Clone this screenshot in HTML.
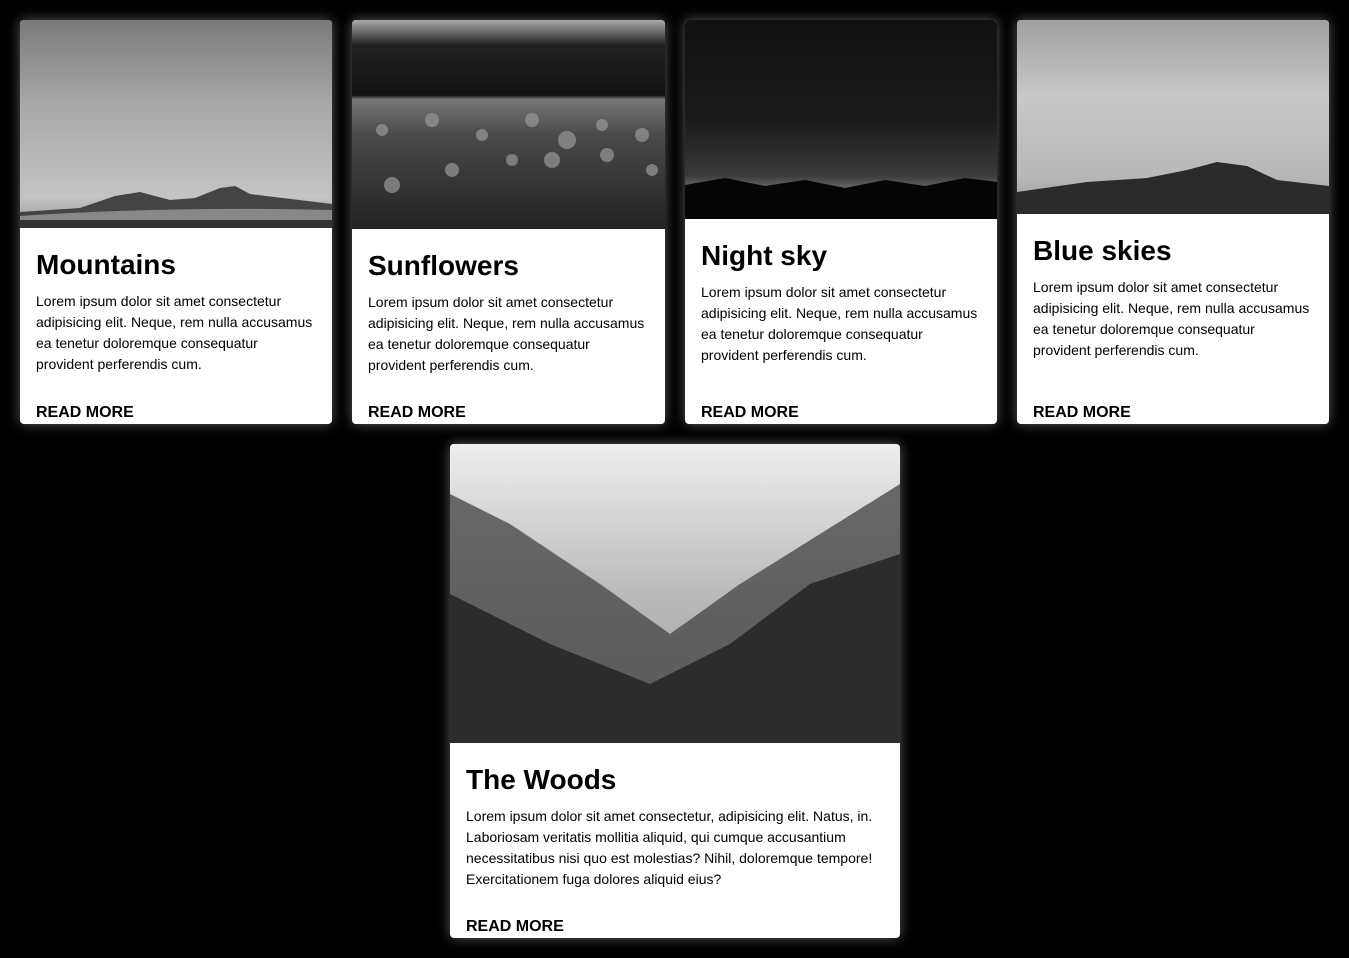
<!DOCTYPE html>
<html><head><style>
*{box-sizing:border-box;margin:0;padding:0}
body{background:#000;width:1349px;height:958px;overflow:hidden;font-family:"Liberation Sans",Arial,sans-serif;position:relative}
.card{position:absolute;background:#fff;border-radius:4px;overflow:hidden;box-shadow:0 0 12px rgba(255,255,255,0.35);display:flex;flex-direction:column}
.img{width:100%;flex:none;position:relative}
.img svg{position:absolute;left:0;top:0;width:100%;height:100%}
.c{padding:0 16px 1px;flex:1;display:flex;flex-direction:column}
h2{font-size:28px;line-height:34px;font-weight:bold;margin-top:20px;color:#000}
p{font-size:14px;line-height:21px;margin-top:9px;color:#000}
a{margin-top:auto;font-weight:bold;font-size:16px;line-height:20px;color:#000;text-decoration:none}
</style></head><body>
<div class="card" style="left:20px;top:20px;width:312px;height:404px">
 <div class="img" style="height:208px;background:linear-gradient(180deg,#7a7a7a 0%,#a8a8a8 40%,#c4c4c4 85%,#999 100%)">
 <svg viewBox="0 0 312 208" preserveAspectRatio="none"><path d="M0 192 L60 188 L95 176 L120 172 L150 180 L175 178 L200 168 L215 166 L230 174 L312 184 L312 208 L0 208Z" fill="#444"/><path d="M0 196 Q150 186 312 190 L312 208 L0 208Z" fill="#888"/><rect y="200" width="312" height="8" fill="#333"/></svg></div>
 <div class="c"><h2>Mountains</h2><p>Lorem ipsum dolor sit amet consectetur adipisicing elit. Neque, rem nulla accusamus ea tenetur doloremque consequatur provident perferendis cum.</p><a>READ MORE</a></div>
</div>
<div class="card" style="left:352px;top:20px;width:313px;height:404px">
 <div class="img" style="height:209px;background:linear-gradient(180deg,#aaa 0%,#222 12%,#111 36%,#777 38%,#4a4a4a 55%,#333 80%,#222 100%)">
 <svg viewBox="0 0 313 209" preserveAspectRatio="none"><g fill="#999" opacity="0.7"><circle cx="30" cy="110" r="6"/><circle cx="80" cy="100" r="7"/><circle cx="130" cy="115" r="6"/><circle cx="180" cy="100" r="7"/><circle cx="215" cy="120" r="9"/><circle cx="250" cy="105" r="6"/><circle cx="290" cy="115" r="7"/><circle cx="40" cy="165" r="8"/><circle cx="100" cy="150" r="7"/><circle cx="160" cy="140" r="6"/><circle cx="200" cy="140" r="8"/><circle cx="255" cy="135" r="7"/><circle cx="300" cy="150" r="6"/></g></svg></div>
 <div class="c"><h2>Sunflowers</h2><p>Lorem ipsum dolor sit amet consectetur adipisicing elit. Neque, rem nulla accusamus ea tenetur doloremque consequatur provident perferendis cum.</p><a>READ MORE</a></div>
</div>
<div class="card" style="left:685px;top:20px;width:312px;height:404px">
 <div class="img" style="height:199px;background:linear-gradient(180deg,#111 0%,#1a1a1a 50%,#3a3a3a 78%,#6a6a6a 85%,#000 100%)">
 <svg viewBox="0 0 312 199" preserveAspectRatio="none"><path d="M0 165 L40 158 L80 166 L120 160 L160 168 L200 160 L240 166 L280 158 L312 162 L312 199 L0 199Z" fill="#050505"/></svg></div>
 <div class="c"><h2>Night sky</h2><p>Lorem ipsum dolor sit amet consectetur adipisicing elit. Neque, rem nulla accusamus ea tenetur doloremque consequatur provident perferendis cum.</p><a>READ MORE</a></div>
</div>
<div class="card" style="left:1017px;top:20px;width:312px;height:404px">
 <div class="img" style="height:194px;background:linear-gradient(180deg,#a0a0a0 0%,#c8c8c8 40%,#b8b8b8 80%,#999 100%)">
 <svg viewBox="0 0 312 194" preserveAspectRatio="none"><path d="M0 172 L70 162 L130 158 L170 150 L200 142 L230 146 L260 160 L312 166 L312 194 L0 194Z" fill="#2a2a2a"/></svg></div>
 <div class="c"><h2>Blue skies</h2><p>Lorem ipsum dolor sit amet consectetur adipisicing elit. Neque, rem nulla accusamus ea tenetur doloremque consequatur provident perferendis cum.</p><a>READ MORE</a></div>
</div>
<div class="card" style="left:450px;top:444px;width:450px;height:494px">
 <div class="img" style="height:299px;background:linear-gradient(180deg,#eee 0%,#d5d5d5 25%,#bbb 50%,#999 100%)">
 <svg viewBox="0 0 450 299" preserveAspectRatio="none"><path d="M0 50 L60 80 L150 140 L220 190 L290 140 L370 90 L450 40 L450 299 L0 299Z" fill="#4a4a4a" opacity="0.8"/><path d="M0 150 L100 200 L200 240 L280 200 L360 140 L450 110 L450 299 L0 299Z" fill="#2c2c2c"/></svg></div>
 <div class="c"><h2>The Woods</h2><p>Lorem ipsum dolor sit amet consectetur, adipisicing elit. Natus, in. Laboriosam veritatis mollitia aliquid, qui cumque accusantium necessitatibus nisi quo est molestias? Nihil, doloremque tempore! Exercitationem fuga dolores aliquid eius?</p><a>READ MORE</a></div>
</div>
</body></html>
